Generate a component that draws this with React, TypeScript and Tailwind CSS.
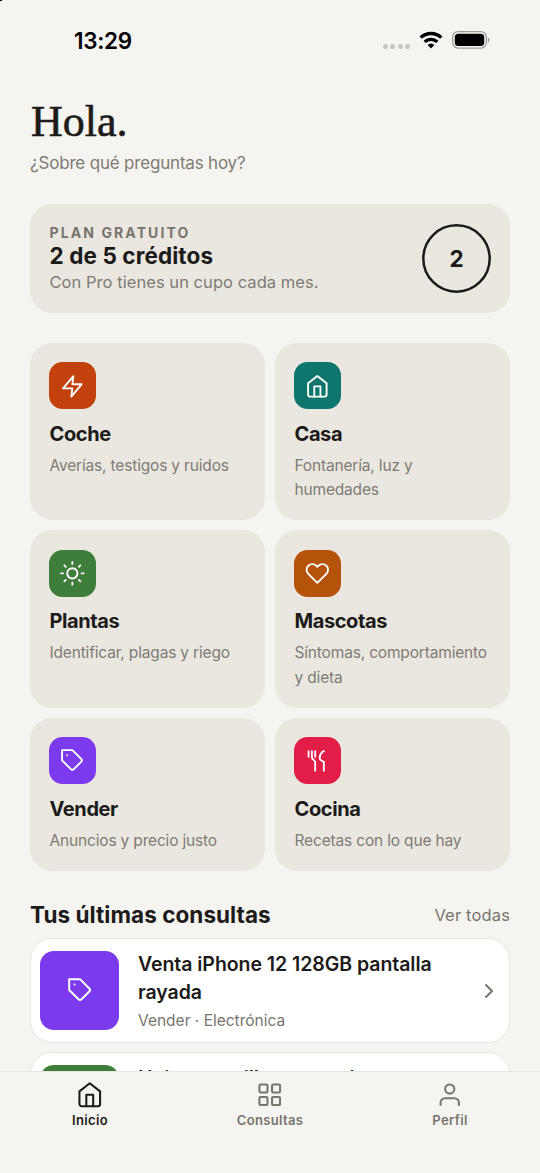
import type { ReactNode } from "react"

const icons: Record<string, ReactNode> = {
  bolt: <path d="M13 2 3 14h9l-1 8 10-12h-9l1-8z" />,
  home: (
    <>
      <path d="m3 9 9-7 9 7v11a2 2 0 0 1-2 2H5a2 2 0 0 1-2-2z" />
      <path d="M9 22V12h6v10" />
    </>
  ),
  sun: (
    <>
      <circle cx="12" cy="12" r="5" />
      <path d="M12 1v2M12 21v2M4.22 4.22l1.42 1.42M18.36 18.36l1.42 1.42M1 12h2M21 12h2M4.22 19.78l1.42-1.42M18.36 5.64l1.42-1.42" />
    </>
  ),
  heart: (
    <path d="M20.84 4.61a5.5 5.5 0 0 0-7.78 0L12 5.67l-1.06-1.06a5.5 5.5 0 0 0-7.78 7.78l1.06 1.06L12 21.23l7.78-7.78 1.06-1.06a5.5 5.5 0 0 0 0-7.78z" />
  ),
  tag: (
    <>
      <path d="m20.59 13.41-7.17 7.17a2 2 0 0 1-2.83 0L2 12V2h10l8.59 8.59a2 2 0 0 1 0 2.82z" />
      <path d="M7 7h.01" />
    </>
  ),
  food: (
    <>
      <path d="M3.500 3v5.500M6.700 3v6c0 3 3.200 2.500 3.200 5v8M9.900 3v5.500" />
      <path d="M18.300 3c-3 1.500-4 4.500-4 7 0 2.200 1.700 2.300 4 3.500V22" />
    </>
  ),
  grid: (
    <>
      <rect x="3" y="3" width="7" height="7" rx="1" />
      <rect x="14" y="3" width="7" height="7" rx="1" />
      <rect x="14" y="14" width="7" height="7" rx="1" />
      <rect x="3" y="14" width="7" height="7" rx="1" />
    </>
  ),
  user: (
    <>
      <path d="M20 21v-2a4 4 0 0 0-4-4H8a4 4 0 0 0-4 4v2" />
      <circle cx="12" cy="7" r="4" />
    </>
  ),
}

function Icon({ name, className }: { name: string; className: string }) {
  return (
    <svg
      viewBox="0 0 24 24"
      fill="none"
      stroke="currentColor"
      strokeWidth="1.8"
      strokeLinecap="round"
      strokeLinejoin="round"
      className={className}
    >
      {icons[name]}
    </svg>
  )
}

const categories = [
  { title: "Coche", text: "Averías, testigos y ruidos", icon: "bolt", color: "bg-[#c2410c]" },
  { title: "Casa", text: "Fontanería, luz y humedades", icon: "home", color: "bg-[#0f766e]" },
  { title: "Plantas", text: "Identificar, plagas y riego", icon: "sun", color: "bg-[#3f7d3a]" },
  { title: "Mascotas", text: "Síntomas, comportamiento y dieta", icon: "heart", color: "bg-[#b45309]" },
  { title: "Vender", text: "Anuncios y precio justo", icon: "tag", color: "bg-[#7c3aed]" },
  { title: "Cocina", text: "Recetas con lo que hay", icon: "food", color: "bg-[#e11d48]" },
]

const queries = [
  { title: "Venta iPhone 12 128GB pantalla rayada", text: "Vender · Electrónica", icon: "tag", color: "bg-[#7c3aed]" },
  { title: "Hojas amarillas en pepino", text: "", icon: "", color: "bg-[#3f7d3a]" },
]

const tabs = [
  { label: "Inicio", icon: "home", color: "text-[#1c1b19]" },
  { label: "Consultas", icon: "grid", color: "text-[#78746e]" },
  { label: "Perfil", icon: "user", color: "text-[#78746e]" },
]

function StatusBar() {
  return (
    <div className="flex h-[80px] shrink-0 items-center justify-between pl-[74px] pr-[50px] text-black">
      <span className="mt-px text-[22.5px] font-semibold tracking-[-0.3px]">13:29</span>
      <div className="flex items-center">
        <div className="mt-3 flex gap-[2.4px]">
          <i className="size-[5px] rounded-[2px] bg-[#c8c7c4]" />
          <i className="size-[5px] rounded-[2px] bg-[#c8c7c4]" />
          <i className="size-[5px] rounded-[2px] bg-[#c8c7c4]" />
          <i className="size-[5px] rounded-[2px] bg-[#c8c7c4]" />
        </div>
        <svg viewBox="0 0 24 18" className="ml-[9px] h-[18px] w-6" fill="none" stroke="black" strokeWidth="3.4">
          <path d="M1.7 6.6a14.8 14.8 0 0 1 20.6 0" />
          <path d="M5.7 10.9a9 9 0 0 1 12.6 0" />
          <path d="M12 17.5 8.6 14a5 5 0 0 1 6.8 0z" fill="black" stroke="none" />
        </svg>
        <svg viewBox="0 0 38 18" className="ml-[9px] h-[18px] w-[38px]">
          <rect x=".7" y=".7" width="33.6" height="16.4" rx="5.3" fill="none" stroke="#9d9c99" strokeWidth="1.3" />
          <rect x="2.8" y="2.8" width="29.4" height="12.2" rx="3.5" />
          <path d="M35.8 6.3c2.2.8 2.2 4.600 0 5.400z" fill="#9d9c99" />
        </svg>
      </div>
    </div>
  )
}

export default function App() {
  return (
    <div className="relative flex h-[1173px] w-[540px] flex-col overflow-hidden bg-[#f5f4f0] font-['Inter',sans-serif] text-[#1c1b19]">
      <i className="absolute left-0 top-0 h-px w-[2px] bg-black" />
      <StatusBar />

      <main className="min-h-0 flex-1 overflow-hidden px-[30px]">
        <h1 className="mt-[16px] pl-px font-['Liberation_Serif',serif] text-[44px] leading-[52px] [-webkit-text-stroke:0.6px_#1c1b19]">
          Hola.
        </h1>
        <p className="mt-[3px] text-[17px] leading-6 tracking-[-0.19px] text-[#7f7b75]">¿Sobre qué preguntas hoy?</p>

        {/* Plan */}
        <section className="mt-[29px] flex h-[109px] items-center justify-between rounded-[22px] bg-[#eae7e0] pl-[19.5px] pr-[19px]">
          <div className="pt-[2px]">
            <p className="text-[14px] font-bold leading-[18px] tracking-[2.1px] text-[#78746e]">PLAN GRATUITO</p>
            <p className="text-[22.5px] font-bold leading-7 tracking-[0.1px]">2 de 5 créditos</p>
            <p className="text-[16.5px] leading-[25px] tracking-[0.05px] text-[#7f7b75]">Con Pro tienes un cupo cada mes.</p>
          </div>
          <div className="relative flex size-[69px] items-center justify-center text-[22.5px] font-bold">
            <svg viewBox="0 0 69 69" className="absolute inset-0 size-full" fill="none" stroke="#1c1b19" strokeWidth="2.5">
              <circle cx="34.5" cy="34.5" r="33.2" />
            </svg>
            2
          </div>
        </section>

        {/* Categories */}
        <section className="mt-[30px] grid grid-cols-2 gap-[10px]">
          {categories.map((c) => (
            <article key={c.title} className="rounded-[22px] bg-[#eae7e0] pb-[17.5px] pl-[19.5px] pr-3 pt-[19.4px]">
              <div className={`-ml-[0.6px] flex size-[47px] items-center justify-center rounded-[13.5px] text-white ${c.color}`}>
                <Icon name={c.icon} className="size-[24.7px]" />
              </div>
              <h2 className="mt-[12.7px] text-[20px] font-bold leading-6 tracking-[-0.4px]">{c.title}</h2>
              <p className="mt-[8px] text-[15.5px] leading-[24.4px] tracking-[-0.17px] text-[#7f7b75]">{c.text}</p>
            </article>
          ))}
        </section>

        {/* Recent queries */}
        <div className="mt-[29px] flex h-[30px] items-center justify-between">
          <h2 className="text-[22.5px] font-bold tracking-[0.05px]">Tus últimas consultas</h2>
          <span className="mt-px text-[16.5px] tracking-[0.15px] text-[#78746e]">Ver todas</span>
        </div>
        <div className="mt-[8px] flex flex-col gap-[9px]">
          {queries.map((q) => (
            <article
              key={q.title}
              className="flex h-[105px] items-center rounded-[22px] border border-[#e8e6e0] bg-white pl-[9px] pr-[14px]"
            >
              <div className={`flex size-[79px] shrink-0 items-center justify-center rounded-[14px] text-white ${q.color}`}>
                <Icon name={q.icon} className="size-[26px]" />
              </div>
              <div className="ml-[19px] flex-1">
                <h3 className="h-14 text-[19.5px] font-semibold leading-7 tracking-[-0.05px]">{q.title}</h3>
                <p className="mt-[4px] h-[21px] text-[15.5px] leading-[22px] text-[#78746e]">{q.text}</p>
              </div>
              <svg viewBox="0 0 12 16" className="ml-6 mt-px h-4 w-3" fill="none" stroke="#78746e" strokeWidth="2" strokeLinecap="round" strokeLinejoin="round">
                <path d="m3 2 6 6-6 6" />
              </svg>
            </article>
          ))}
        </div>
      </main>

      {/* Tab bar */}
      <nav className="grid h-[102px] shrink-0 grid-cols-3 border-t border-[#e8e6e0] bg-[#f5f4f0] pt-[9px]">
        {tabs.map((t) => (
          <div key={t.label} className={`flex flex-col items-center ${t.color}`}>
            <Icon name={t.icon} className="size-[27.5px]" />
            <span className="mt-[2px] text-[13px] font-semibold leading-[18px] tracking-[0.35px]">{t.label}</span>
          </div>
        ))}
      </nav>
    </div>
  )
}
